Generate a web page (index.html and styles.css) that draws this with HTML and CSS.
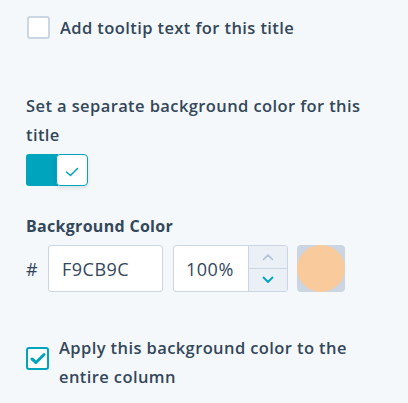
FILE: index.html
```html
<!DOCTYPE html>
<html>
<head>
<meta charset="utf-8">
<link rel="stylesheet" href="styles.css">
</head>
<body>
<div class="panel">
  <label class="check-row first">
    <span class="box"></span>
    <span class="check-text">Add tooltip text for this title</span>
  </label>

  <div class="field toggle-field">
    <div class="field-label">Set a separate background color for this title</div>
    <div class="toggle">
      <span class="toggle-track"></span>
      <span class="toggle-knob">
        <svg width="14" height="10" viewBox="0 0 14 10"><path d="M1.5 5 L5.5 8.5 L12.5 1.5" fill="none" stroke="#00a4bd" stroke-width="1.5" stroke-linecap="round" stroke-linejoin="round"/></svg>
      </span>
    </div>
  </div>

  <div class="field color-field">
    <div class="bold-label">Background Color</div>
    <div class="color-row">
      <span class="hash">#</span>
      <div class="input hex">F9CB9C</div>
      <div class="input pct">
        <span class="pct-value">100%</span>
        <span class="stepper">
          <span class="step up"><svg width="12" height="8" viewBox="0 0 12 8"><path d="M1.5 6.5 L6 2 L10.5 6.5" fill="none" stroke="#b0c1d4" stroke-width="1.6" stroke-linecap="round" stroke-linejoin="round"/></svg></span>
          <span class="step down"><svg width="12" height="8" viewBox="0 0 12 8"><path d="M1.5 1.5 L6 6 L10.5 1.5" fill="none" stroke="#00a4bd" stroke-width="1.8" stroke-linecap="round" stroke-linejoin="round"/></svg></span>
        </span>
      </div>
      <div class="swatch"><span class="swatch-dot"></span></div>
    </div>
  </div>

  <label class="check-row last">
    <span class="box checked">
      <svg width="16" height="13" viewBox="0 0 16 13"><path d="M2 7 L6 10.5 L14 2.5" fill="none" stroke="#00a4bd" stroke-width="3" stroke-linecap="round" stroke-linejoin="round"/></svg>
    </span>
    <span class="check-text">Apply this background color to the entire column</span>
  </label>
</div>
</body>
</html>
```

FILE: styles.css
```css
html, body {
  margin: 0;
  padding: 0;
  background: #f5f8fa;
}
body {
  font-family: "Open Sans", "Noto Sans", sans-serif;
  color: #33475b;
  font-size: 17px;
}
.panel {
  padding: 13px 26px 0 26px;
  width: 345px;
}
.check-row {
  display: flex;
  align-items: flex-start;
  gap: 10px;
}
.check-row.first {
  align-items: center;
  padding-left: 1px;
}
.box {
  flex: none;
  width: 19px;
  height: 19px;
  border: 2px solid #cbd6e2;
  border-radius: 3px;
  background: #fff;
  display: flex;
  align-items: center;
  justify-content: center;
}
.box.checked {
  border-color: #00a4bd;
  margin-top: 14px;
}
.check-text {
  font-weight: 600;
  font-size: 16.5px;
  letter-spacing: 0.4px;
  line-height: 29px;
}
.last .check-text {
  width: 300px;
}
.field-label {
  font-weight: 600;
  font-size: 16.5px;
  letter-spacing: 0.4px;
  line-height: 29px;
  width: 345px;
}
.toggle-field {
  margin-top: 49px;
}
.toggle {
  display: flex;
  margin-top: 5px;
  width: 63px;
  height: 32px;
}
.toggle-track {
  width: 32px;
  height: 32px;
  background: #00a4bd;
  border-radius: 3px 0 0 3px;
}
.toggle-knob {
  width: 30px;
  height: 30px;
  margin-left: -2px;
  border: 1px solid #00a4bd;
  border-radius: 4px;
  background: #fff;
  box-shadow: 0 2px 4px rgba(0,0,0,0.1);
  display: flex;
  align-items: center;
  justify-content: center;
}
.toggle-knob svg { margin-top: 3px; }
.color-field {
  margin-top: 29px;
}
.bold-label {
  font-weight: 700;
  font-size: 16px;
  letter-spacing: 0.3px;
  line-height: 22px;
}
.color-row {
  display: flex;
  align-items: center;
  margin-top: 8px;
}
.hash {
  width: 22px;
  font-size: 18px;
}
.input {
  height: 45px;
  border: 1px solid #cbd6e2;
  border-radius: 3px;
  background: #fff;
  box-sizing: content-box;
  font-size: 18px;
  letter-spacing: 0.5px;
}
.hex {
  width: 113px;
  display: flex;
  align-items: center;
  padding-left: 0;
  text-indent: 13px;
}
.pct {
  margin-left: 10px;
  width: 113px;
  display: flex;
  overflow: hidden;
}
.pct-value {
  flex: 1;
  display: flex;
  align-items: center;
  padding-left: 12px;
}
.stepper {
  width: 38px;
  display: flex;
  flex-direction: column;
  border-left: 1px solid #cbd6e2;
  background: #eaf0f6;
}
.step {
  flex: 1;
  display: flex;
  align-items: center;
  justify-content: center;
}
.step.up {
  border-bottom: 1px solid #cbd6e2;
}
.swatch {
  margin-left: 9px;
  width: 48px;
  height: 47px;
  border-radius: 4px;
  background: #cbd6e2;
  position: relative;
}
.swatch-dot {
  position: absolute;
  inset: 0;
  border-radius: 50%;
  background: #f8ca9c;
}
.check-row.last {
  margin-top: 41px;
  padding-left: 0;
}
```
